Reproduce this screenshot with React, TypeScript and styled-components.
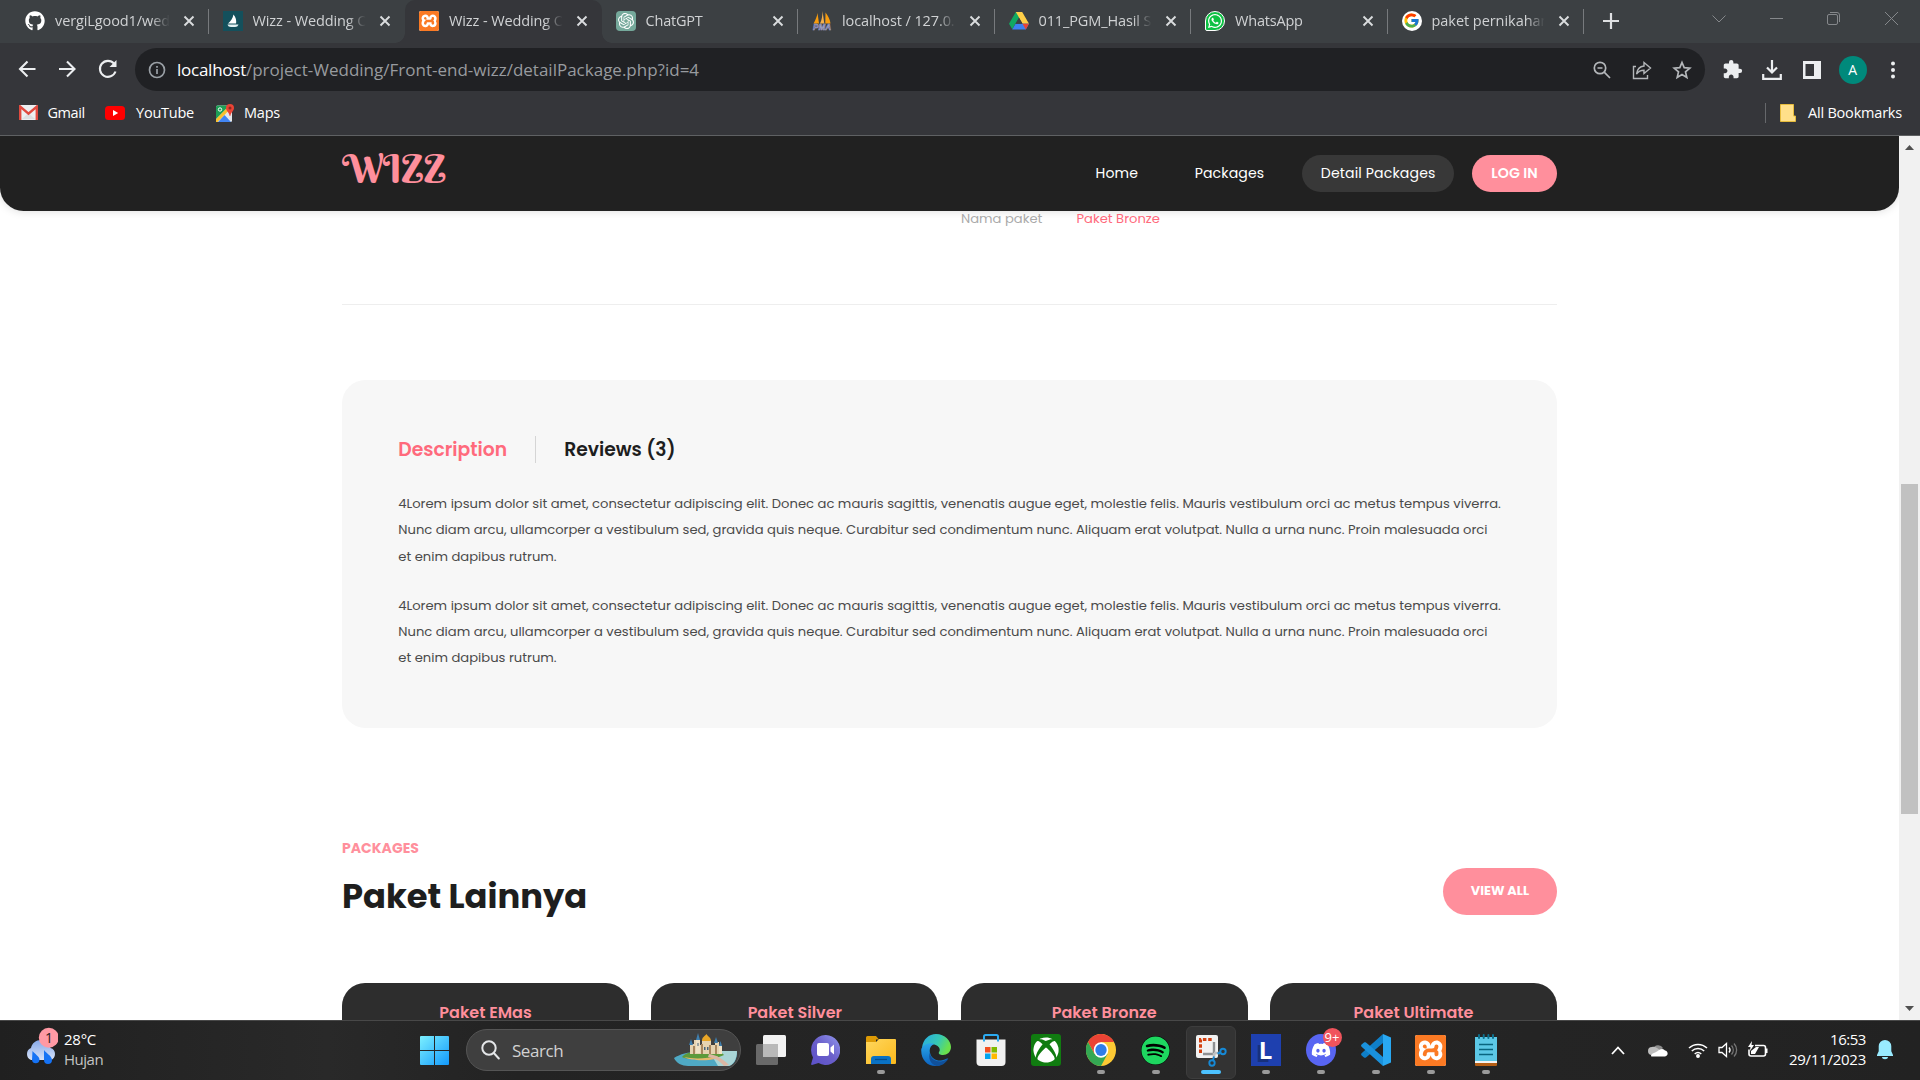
import React from 'react';
import styled, { createGlobalStyle, css } from 'styled-components';
import { SiOpenai, SiXampp } from 'react-icons/si';
import { FaGithub, FaXbox, FaSpotify, FaDiscord, FaWhatsapp } from 'react-icons/fa';
import { FcGoogle } from 'react-icons/fc';
import { MdExtension } from 'react-icons/md';

const ui = `"Segoe UI", "Open Sans", "Noto Sans", sans-serif`;
const site = `Poppins, Inter, "Liberation Sans", sans-serif`;
const pink = '#ff8f9c';
const rose = '#ff6a7c';

const GlobalStyle = createGlobalStyle`
  * { box-sizing: border-box; }
  body { margin: 0; background: #fff; }
  svg { display: block; flex: none; }
`;

const Screen = styled.div`
  width: 1920px;
  height: 1080px;
  display: flex;
  flex-direction: column;
  overflow: hidden;
  font-family: ${ui};
`;

const Label = styled.span<{ $ls?: number }>`
  white-space: nowrap;
  letter-spacing: ${p => p.$ls ?? 0}px;
`;

/* ---------- browser chrome ---------- */

const TabStrip = styled.div`
  height: 43px;
  flex: none;
  display: flex;
  padding-left: 12px;
  background: #3c4043;
  color: #d0d2d4;
`;

const Tab = styled.div<{ $active?: boolean; $divider?: boolean }>`
  width: 196.5px;
  height: 43px;
  flex: none;
  display: flex;
  align-items: center;
  padding: 0 14px 2px 14px;
  position: relative;
  font-size: 14.5px;
  &:first-child { padding-left: 13px; }
  ${p => p.$active && css`
    background: #35363a;
    border-radius: 10px 10px 0 0;
    &::before, &::after {
      content: '';
      position: absolute;
      bottom: 0;
      width: 10px;
      height: 10px;
    }
    &::before { left: -10px; background: radial-gradient(circle at 0 0, transparent 9.5px, #35363a 10px); }
    &::after { right: -10px; background: radial-gradient(circle at 100% 0, transparent 9.5px, #35363a 10px); }
  `}
  ${p => p.$divider && css`
    background-image: linear-gradient(#777a7d, #777a7d);
    background-size: 1px 25px;
    background-position: right 9px;
    background-repeat: no-repeat;
  `}
`;

const TabTitle = styled.span`
  flex: 1;
  min-width: 0;
  margin: 0 11px 0 10px;
  overflow: hidden;
  white-space: nowrap;
  mask-image: linear-gradient(90deg, #000 82%, transparent 98%);
`;

const NewTab = styled.div`
  display: flex;
  align-items: center;
  padding: 0 0 1px 19px;
`;

const WindowButtons = styled.div`
  margin-left: auto;
  display: flex;
  width: 230px;
  height: 37px;
  align-items: center;
`;

const WindowButton = styled.div`
  width: 57.5px;
  display: flex;
  justify-content: center;
  color: #85888b;
`;

const Toolbar = styled.div`
  height: 53px;
  flex: none;
  display: flex;
  align-items: center;
  background: #35363a;
  color: #eceef0;
`;

const NavButtons = styled.div`
  width: 135px;
  display: flex;
  align-items: center;
  justify-content: space-between;
  padding: 0 16px 2px 16px;
`;

const AddressBar = styled.div`
  width: 1570px;
  height: 43px;
  border-radius: 22px;
  display: flex;
  align-items: center;
  padding: 0 13px 0 13px;
  background: #202124;
  color: #b4b7ba;
`;

const Url = styled.span`
  margin-left: 11px;
  flex: 1;
  font-size: 17px;
  white-space: nowrap;
  color: #989b9f;
`;

const UrlHost = styled.span`
  color: #fff;
  letter-spacing: -0.25px;
`;

const AddressActions = styled.div`
  display: flex;
  align-items: center;
  gap: 20px;
`;

const Extensions = styled.div`
  flex: 1;
  display: flex;
  align-items: center;
`;

const ExtensionSlot = styled.div`
  width: 40.2px;
  display: flex;
  justify-content: center;
  &:first-child { margin-left: 7px; }
`;

const Avatar = styled.div`
  width: 28px;
  height: 28px;
  flex: none;
  border-radius: 50%;
  display: flex;
  align-items: center;
  justify-content: center;
  background: #00897b;
  color: #fff;
  font-size: 14px;
`;

const BookmarksBar = styled.div`
  height: 40px;
  flex: none;
  display: flex;
  align-items: center;
  padding: 0 18px 6px 19px;
  border-bottom: 1px solid #5f6163;
  background: #35363a;
  color: #fff;
  font-size: 14.5px;
`;

const Bookmark = styled.div<{ $gap: number; $space: number }>`
  display: flex;
  align-items: center;
  gap: ${p => p.$gap}px;
  margin-right: ${p => p.$space}px;
`;

const AllBookmarks = styled.div`
  margin-left: auto;
  display: flex;
  align-items: center;
  height: 20px;
  gap: 12px;
  padding-left: 14px;
  border-left: 1px solid #66686b;
`;

/* ---------- web page ---------- */

const Viewport = styled.div`
  height: 884px;
  flex: none;
  display: flex;
  background: #fff;
`;

const Page = styled.div`
  width: 1899px;
  height: 884px;
  overflow: hidden;
  font-family: ${site};
`;

const Header = styled.header`
  height: 75px;
  display: flex;
  justify-content: center;
  background: #212121;
  border-radius: 0 0 23.5px 23.5px;
  box-shadow: 0 0 10px rgba(0, 0, 0, 0.15);
`;

const Container = styled.div`
  width: 1215px;
  margin: 0 auto;
`;

const HeaderInner = styled(Container)`
  display: flex;
  align-items: flex-start;
`;

const Logo = styled.h1`
  margin: 0;
  color: ${pink};
  font: 400 38.7px/66px "Berkshire Swash", "Liberation Serif", serif;
`;

const Nav = styled.nav`
  margin: 19px 0 0 auto;
  display: flex;
  align-items: center;
`;

const NavLink = styled.a<{ $active?: boolean; $space: number }>`
  height: 37px;
  line-height: 37px;
  padding: 0 18.5px;
  margin-right: ${p => p.$space}px;
  border-radius: 19px;
  background: ${p => (p.$active ? '#383838' : 'transparent')};
  color: #fff;
  font-size: 14.1px;
  font-weight: 400;
  letter-spacing: 0.13px;
  white-space: nowrap;
`;

const LoginButton = styled.a`
  width: 85px;
  height: 37px;
  border-radius: 19px;
  background: ${pink};
  color: #fff;
  font-size: 14.2px;
  font-weight: 600;
  line-height: 37px;
  text-align: center;
  white-space: nowrap;
`;

const PackageInfo = styled.div`
  display: flex;
  height: 94px;
  padding: 1px 0 0 619px;
  border-bottom: 1px solid #eee;
  font-size: 13.125px;
  line-height: 14px;
`;

const InfoLabel = styled.span`
  width: 115.5px;
  color: #aaa;
`;

const InfoValue = styled.span`
  color: ${rose};
`;

const DetailCard = styled.section`
  height: 348px;
  margin-top: 75px;
  padding: 56px 50px 0 56.25px;
  border-radius: 23.5px;
  background: #f7f7f7;
`;

const DetailTabs = styled.div`
  display: flex;
  height: 27px;
`;

const DetailTab = styled.h3<{ $active?: boolean }>`
  margin: 0;
  padding: ${p => (p.$active ? '0 28px 0 0' : '0 0 0 28px')};
  border-right: ${p => (p.$active ? '1px solid #d5d5d5' : '0')};
  color: ${p => (p.$active ? rose : '#1e1e1e')};
  font-size: 18.75px;
  font-weight: 600;
  line-height: 28px;
`;

const DetailText = styled.p`
  margin: 0 0 23px;
  color: #4a4a4a;
  font-size: 13.14px;
  line-height: 26.25px;
`;

const DetailBody = styled.div`
  margin-top: 28px;
`;

const TextLine = styled.span`
  display: block;
  white-space: nowrap;
`;

const SectionHead = styled.div`
  display: flex;
  height: 148px;
  justify-content: space-between;
  margin-top: 107px;
`;

const Eyebrow = styled.h6`
  margin: 5px 0 0;
  color: ${pink};
  font-size: 14.06px;
  font-weight: 700;
  line-height: 16px;
`;

const SectionTitle = styled.h2`
  margin: 19px 0 0;
  color: #1e1e1e;
  font-size: 33.75px;
  font-weight: 700;
  line-height: 44px;
`;

const ViewAll = styled.a`
  width: 114px;
  height: 47px;
  margin-top: 33px;
  border-radius: 24px;
  background: ${pink};
  color: #fff;
  font-size: 12.9px;
  font-weight: 700;
  line-height: 45px;
  text-align: center;
`;

const Cards = styled.div`
  display: grid;
  grid-template-columns: repeat(4, 287px);
  justify-content: space-between;
`;

const PackageCard = styled.article`
  height: 60px;
  padding-top: 18px;
  border-radius: 23px 23px 0 0;
  background: #2d2d2d;
  color: ${pink};
  font-size: 16px;
  font-weight: 600;
  line-height: 24px;
  text-align: center;
`;

const ScrollBar = styled.div`
  width: 21px;
  display: flex;
  flex-direction: column;
  align-items: center;
  padding: 9px 0;
  background: #f1f1f1;
`;

const ScrollThumb = styled.div`
  width: 17px;
  height: 330px;
  margin: 334px 0 auto;
  background: #c1c1c1;
`;

/* ---------- taskbar ---------- */

const Taskbar = styled.div`
  height: 60px;
  flex: none;
  display: grid;
  grid-template-columns: 407px 1107px 1fr;
  border-top: 1px solid #484848;
  background: linear-gradient(90deg, #202020, #292929 17%, #232323 27%, #262626 60%, #222);
  color: #fff;
  font-size: 15px;
`;

const Weather = styled.div`
  display: flex;
  padding: 6px 0 0 22px;
  gap: 6px;
`;

const Stack = styled.div<{ $end?: boolean }>`
  display: flex;
  flex-direction: column;
  line-height: 20px;
  padding-top: 2px;
  align-items: ${p => (p.$end ? 'flex-end' : 'flex-start')};
`;

const Muted = styled(Label)`
  color: #c4c4c4;
`;

const Apps = styled.div`
  display: flex;
`;

const AppSlot = styled.div<{ $active?: boolean }>`
  width: 55px;
  height: 60px;
  flex: none;
  display: flex;
  flex-direction: column;
  align-items: center;
  padding-top: 11px;
  ${p => p.$active && css`
    width: 50px;
    height: 53px;
    margin: 5px 2.5px 0;
    border: 1px solid #3d3d3d;
    border-radius: 6px;
    background: #333;
    padding-top: 5px;
  `}
`;

const IconBox = styled.div`
  width: 36px;
  height: 36px;
  display: flex;
  align-items: center;
  justify-content: center;
`;

const Indicator = styled.div<{ $active?: boolean }>`
  width: ${p => (p.$active ? 20 : 8)}px;
  height: 4px;
  margin-top: 2px;
  border-radius: 2px;
  background: ${p => (p.$active ? '#4cc2ff' : '#9a9a9a')};
`;

const SearchBox = styled.div`
  width: 275px;
  height: 42px;
  margin: 8px 2px 0 4px;
  flex: none;
  display: flex;
  align-items: center;
  padding: 0 2px 0 14px;
  border: 1px solid #555;
  border-radius: 21px;
  background: #3f3f3f;
  color: #d2d2d2;
  font-size: 17px;
  gap: 12px;
`;

const Scene = styled.div`
  margin-left: auto;
`;

const LetterIcon = styled.div`
  width: 30px;
  height: 32px;
  background: #1e40af;
  color: #fff;
  font: 700 24px/31px "Open Sans", sans-serif;
  text-align: center;
  text-shadow: -3px 3px 0 #17307c;
`;

const XamppIcon = styled.div<{ $size: number }>`
  width: ${p => p.$size}px;
  height: ${p => p.$size}px;
  border-radius: 2px;
  overflow: hidden;
  display: flex;
  align-items: center;
  justify-content: center;
  background: #fff;
  color: #fb7a24;
  svg { transform: scale(1.04); }
`;

const XboxIcon = styled.div`
  width: 30px;
  height: 32px;
  border-radius: 3px;
  display: flex;
  align-items: center;
  justify-content: center;
  background: #107c10;
`;

const DiscordIcon = styled.div`
  width: 30px;
  height: 32px;
  border-radius: 50%;
  display: flex;
  align-items: center;
  justify-content: center;
  position: relative;
  background: #5865f2;
`;

const DiscordBadge = styled.span`
  position: absolute;
  top: -6px;
  left: 17px;
  width: 19px;
  height: 19px;
  border-radius: 50%;
  background: #f0545c;
  font-size: 13px;
  line-height: 18px;
  text-align: center;
`;

const OpenAiIcon = styled.div`
  width: 20px;
  height: 20px;
  border-radius: 4px;
  display: flex;
  align-items: center;
  justify-content: center;
  background: #75a99b;
  color: #fff;
`;

const SpotifyIcon = styled.div`
  width: 29px;
  height: 29px;
  border-radius: 50%;
  background: #000;
  color: #1ed760;
`;

const WhatsIcon = styled.div`
  width: 20px;
  height: 20px;
  display: flex;
  align-items: center;
  justify-content: center;
  border-radius: 10px 10px 10px 2px;
  border: 1px solid #fff;
  background: #0dc143;
  color: #fff;
`;

const GoogleIcon = styled.div`
  width: 20px;
  height: 20px;
  border-radius: 50%;
  display: flex;
  align-items: center;
  justify-content: center;
  background: #fff;
`;

const Tray = styled.div`
  display: flex;
  align-items: center;
  justify-content: flex-end;
  padding: 0 26px 2px 0;
`;

const TrayIcons = styled.div`
  display: flex;
  align-items: center;
  margin-right: 15.5px;
`;

const TraySlot = styled.div<{ $w: number }>`
  width: ${p => p.$w}px;
  display: flex;
  justify-content: center;
`;

const Clock = styled(Stack)`
  margin-right: 10px;
  height: 58px;
  padding-top: 8px;
`;

/* ---------- drawings ---------- */

const Close = () => (
  <svg width="12" height="12" viewBox="0 0 12 12" stroke="#dadcde" strokeWidth="1.900"><path d="M1.500 1.500l9 9M10.500 1.500l-9 9" /></svg>
);

const Sailboat = () => (
  <svg width="20" height="20" viewBox="0 0 20 20">
    <rect width="20" height="20" fill="#14505c" />
    <path d="M10.500 3.500c2.500 3 3 6 2.600 9H5c2.500-2 4.800-5 5.500-9z" fill="#fff" />
    <path d="M4.500 13.500h11c-.6 1.700-1.800 2.500-3.500 2.500H8c-1.800 0-3-.8-3.500-2.500z" fill="#e4f2f3" />
  </svg>
);

const PhpMyAdmin = () => (
  <svg width="20" height="20" viewBox="0 0 20 20">
    <path d="M5.500 2L7 12.500H1.500C3.500 9 5 5.500 5.500 2z" fill="#f89c0e" />
    <path d="M10.500 0l1.800 12.500H8C9.800 9 10.500 5 10.500 0z" fill="#f5b04c" />
    <path d="M13.500 1.500c2.500 3 4.500 7 5 11h-5.200z" fill="#f89c0e" />
    <text x="1" y="19.300" textLength="18" lengthAdjust="spacingAndGlyphs" fontFamily="Liberation Sans" fontWeight="700" fontStyle="italic" fontSize="8.500" fill="#5a5a8e" stroke="#b5b5d6" strokeWidth=".5">PMA</text>
  </svg>
);

const Drive = () => (
  <svg width="20" height="18" viewBox="0 0 20 18">
    <path d="M6.800 0h6.400l-6.600 11.600-3.300 5.700L0 11.700z" fill="#11a861" />
    <path d="M6.800 0h6.400l6.800 11.700h-6.500z" fill="#ffcf48" />
    <path d="M6.600 11.700H20l-3.200 5.700H3.200z" fill="#3d81f0" />
    <path d="M13.500 11.700H20l-3.200 5.700z" fill="#e94436" />
    <path d="M10 5.700l3.500 6h-7z" fill="#3c4043" />
  </svg>
);

const Gmail = () => (
  <svg width="19" height="15" viewBox="0 0 19 15">
    <rect width="19" height="15" rx="1.500" fill="#eceff1" />
    <path d="M3 14l6.500-6L16 14z" fill="#dcdfe1" />
    <path d="M1.200 15V1.600l8.300 7 8.300-7V15" fill="none" stroke="#e04a3f" strokeWidth="2.400" />
  </svg>
);

const YouTube = () => (
  <svg width="20" height="14" viewBox="0 0 20 14"><rect width="20" height="14" rx="3.500" fill="#f00" /><path d="M8 4l5.200 3L8 10z" fill="#fff" /></svg>
);

const Maps = () => (
  <svg width="18" height="18" viewBox="0 0 18 18">
    <rect y="1.500" width="16" height="16.500" rx="1.500" fill="#e5e8ea" />
    <path d="M2 18l6.500-7 6.500 7z" fill="#4285f4" />
    <path d="M0 15L12 2.500l2.500 2.300L1.500 18H0z" fill="#fbc02d" />
    <path d="M0 15V3a1.500 1.500 0 011.500-1.500H12L11 3.800z" fill="#1e9f56" />
    <path d="M14 0a4 4 0 00-4 4c0 3 3 4 3.700 8h.6C15 8 18 7 18 4a4 4 0 00-4-4z" fill="#ea4335" />
    <circle cx="14" cy="4" r="1.500" fill="#8c2a20" />
    <circle cx="4" cy="5.500" r="1.700" fill="none" stroke="#fff" />
  </svg>
);

const Rain = () => (
  <svg width="36" height="46" viewBox="0 0 36 46">
    <defs><linearGradient id="cloud" x1="0" y1="0" x2="0" y2="1"><stop offset="0" stopColor="#86a9ea" /><stop offset="1" stopColor="#d6e1f7" /></linearGradient></defs>
    <path d="M9 33a6.500 6.500 0 010-12c1-5 5-8 10-8s8.500 3 9.500 8c6 1 6 11 0 12z" fill="url(#cloud)" />
    <path d="M10.500 24c2 3 7 5 7 9a3.800 3.800 0 01-7.500 0zM22 23c2 3 8 6 8 10a4 4 0 01-8 0z" fill="#1673f5" />
    <circle cx="26.800" cy="10.800" r="10" fill="#ff99a4" />
    <text x="27" y="16" textAnchor="middle" fontFamily="Open Sans" fontSize="14" fill="#2b1a1c">1</text>
  </svg>
);

const Windows = () => (
  <svg width="29" height="29" viewBox="0 0 29 29">
    <defs><linearGradient id="win" x1="0" y1="0" x2="1" y2="1"><stop offset="0" stopColor="#7cf0ff" /><stop offset="1" stopColor="#1299fb" /></linearGradient></defs>
    <path d="M1 0h13v14H0V1a1 1 0 011-1zM15 0h13a1 1 0 011 1v13H15zM0 15h14v14H1a1 1 0 01-1-1zM15 15h14v13a1 1 0 01-1 1H15z" fill="url(#win)" />
  </svg>
);

const Castle = () => (
  <svg width="64" height="34" viewBox="0 0 64 34">
    <path d="M0 25C6 21 14 19 24 19h39c0 7-3 14-10 14H14C8 33 2 30 0 25z" fill="#4fa9c4" />
    <path d="M35 18h28c0 8-4 15-9 15H44z" fill="#a9d5d6" />
    <path d="M8 24c4-5 12-6 22-6s18 1 20 4c-6 3-15 4-24 4s-14 0-18-2z" fill="#5d9a3b" />
    <path d="M10 24c8 2 22 2 34-1l-3 3c-9 2-24 2-31-2z" fill="#e5b96d" />
    <path d="M35 21c7 1 13 4 20 11l-5 1c-4-5-9-8-16-9z" fill="#dcb7a4" />
    <path d="M16 21V11h4V7h4v5h4V7h9v5h4V9h4v12z" fill="#e6d3b1" />
    <path d="M19 13h2v8h-2zM27 11h2v10h-2zM35 12h2v9h-2zM41 12h2v9h-2z" fill="#a8875f" />
    <path d="M15 12l2-6 2 6zM22 7l2-7 2 7zM40 10l2-6 2 6zM45 13l1.500-5 1.500 5z" fill="#3f7fae" />
    <path d="M28 8c0-4 2-4 4.500-7C34 4 37 4 37 8z" fill="#e8a526" />
    <path d="M22 7h4v13h-4zM45 13h3v8h-3z" fill="#f0e2c6" />
    <path d="M30 14h1.500v3H30zM33 14h1.500v3H33zM23.500 10h1v3h-1z" fill="#4b6578" />
  </svg>
);

const TaskView = () => (
  <svg width="30" height="30" viewBox="0 0 30 30"><rect x="7" width="23" height="22" rx="1.500" fill="#f2f2f2" /><rect y="9" width="22" height="21" rx="1.500" fill="#696969" /><path d="M7 9h15v13H7z" fill="#b9b9b9" /></svg>
);

const Chat = () => (
  <svg width="29" height="30" viewBox="0 0 29 30">
    <defs><linearGradient id="chat" x1="0" y1="1" x2="1" y2="0"><stop offset="0" stopColor="#5b50c9" /><stop offset=".5" stopColor="#6a5fca" /><stop offset="1" stopColor="#9298ee" /></linearGradient></defs>
    <path d="M14.500 0a14.500 15 0 11-7 28L1 30c-.8 0-1-.5-.8-1.200L2 22.500A14.500 15 0 0114.500 0z" fill="url(#chat)" />
    <rect x="6" y="8" width="12" height="13" rx="2" fill="#fff" /><path d="M19.500 12.500l3.500-3v10l-3.500-3z" fill="#fff" />
  </svg>
);

const Explorer = () => (
  <svg width="30" height="28" viewBox="0 0 30 28">
    <defs><linearGradient id="folder" x1="0" y1="0" x2="1" y2="1"><stop offset="0" stopColor="#ffd75e" /><stop offset="1" stopColor="#fbb91c" /></linearGradient></defs>
    <path d="M0 1.500A1.500 1.500 0 011.500 0H10l3 3.500h-3V8H0z" fill="#dd9a05" />
    <path d="M0 6h10l3-3h16a1 1 0 011 1v23a1 1 0 01-1 1H0z" fill="url(#folder)" />
    <path d="M5 28v-5a3 3 0 013-3h14a3 3 0 013 3v5z" fill="#0a72c4" /><path d="M9 23.500h12" stroke="#054d8c" strokeWidth="1.200" />
  </svg>
);

const Edge = () => (
  <svg width="30" height="32" viewBox="0 0 30 32">
    <defs>
      <linearGradient id="edgeTop" x1="0" y1="0" x2="1" y2=".4"><stop offset="0" stopColor="#27a9e6" /><stop offset=".6" stopColor="#36c9b4" /><stop offset="1" stopColor="#6ae04c" /></linearGradient>
      <linearGradient id="edgeLow" x1="0" y1="0" x2="0" y2="1"><stop offset="0" stopColor="#2aa7e8" /><stop offset="1" stopColor="#0b62c0" /></linearGradient>
    </defs>
    <path d="M1 14C2 5 8 0 15 0c9 0 15 7 15 13 0 5-4 8-8 8-3 0-5-1-4-3 1-1 1-3 0-4.500C15 9 6 8.500 1 14z" fill="url(#edgeTop)" />
    <path d="M.3 15C3 9.500 9 8.500 13.500 10c-4 1-5.500 5-4.500 9 1.200 5 6 8 11 7.500 3-.3 5-1.500 7-2.500-3 5-7 8-12.500 8C6 32-.5 25 .3 15z" fill="url(#edgeLow)" />
    <path d="M9 18c0 6 5 10 11 9.500 3-.3 5-1.500 7.500-3-3 5-7 7.500-12 7.500C9 30 7 24 9 18z" fill="#10509a" />
  </svg>
);

const Store = () => (
  <svg width="30" height="32" viewBox="0 0 30 32">
    <path d="M8 8V2.500A1.500 1.500 0 019.500 1h11A1.500 1.500 0 0122 2.500V8" fill="none" stroke="#2caaf0" strokeWidth="2" />
    <path d="M0.500 5.500h29V28a4 4 0 01-4 4h-21a4 4 0 01-4-4z" fill="#f1f1f1" />
    <path d="M8 5v2.500M22 5v2.500" stroke="#2caaf0" strokeWidth="2" />
    <path d="M9 13h5.500v5.500H9z" fill="#f25022" /><path d="M15.500 13H21v5.500h-5.500z" fill="#7fba00" />
    <path d="M9 19.500h5.500V25H9z" fill="#00a4ef" /><path d="M15.500 19.500H21V25h-5.500z" fill="#ffb900" />
  </svg>
);

const Chrome = () => (
  <svg width="30" height="32" viewBox="0 0 30 30" preserveAspectRatio="none">
    <circle cx="15" cy="15" r="15" fill="#fcc934" />
    <path d="M2 7.500A15 15 0 0128 7.500H15l-6.500 11z" fill="#ea4335" />
    <path d="M2 7.500A15 15 0 0015 30l6.500-11.300L15 15 8.500 18.700z" fill="#34a853" />
    <circle cx="15" cy="15" r="7.300" fill="#fff" /><circle cx="15" cy="15" r="5.700" fill="#2f7de9" />
  </svg>
);

const Snip = () => (
  <svg width="32" height="34" viewBox="0 0 32 34">
    <rect x="1" y="2" width="22" height="23" rx="2" fill="#f2f2f2" />
    <path d="M5.500 20V6.500H17" fill="none" stroke="#d3400f" strokeWidth="3" strokeDasharray="3.500 1.800" />
    <path d="M8 21h11V9" fill="none" stroke="#8f9193" strokeWidth="2.400" /><path d="M19 20v5M19 20h6" stroke="#bfc1c3" strokeWidth="2.600" />
    <path d="M18 27.500l1-4M22.500 20.500l3-1" fill="none" stroke="#1689d6" strokeWidth="1.900" />
    <circle cx="28" cy="18.500" r="2.700" fill="none" stroke="#1689d6" strokeWidth="1.900" /><circle cx="17" cy="30" r="2.700" fill="none" stroke="#1689d6" strokeWidth="1.900" />
  </svg>
);

const Code = () => (
  <svg width="30" height="32" viewBox="0 0 30 32">
    <path d="M22 0l8 3.500v25L22 32z" fill="#29a8f2" />
    <path d="M22 0v9L5 23.500c-.6.500-1.400.4-2 0L.6 21.400c-.7-.6-.7-1.600 0-2.200z" fill="#0f7fc8" />
    <path d="M22 32v-9L5 8.500c-.6-.5-1.400-.4-2 0L.6 10.600c-.7.600-.7 1.600 0 2.200z" fill="#1a91dc" />
  </svg>
);

const Notepad = () => (
  <svg width="24" height="32" viewBox="0 0 24 32">
    <path d="M1 28h22v3a1 1 0 01-1 1H2a1 1 0 01-1-1z" fill="#b55f16" /><path d="M1 26h22v3H1z" fill="#f3f3f3" />
    <path d="M1 3h22v24H1z" fill="#5cc8e6" />
    <path d="M5 1v3M9.700 1v3M14.400 1v3M19 1v3" stroke="#0d6f8c" strokeWidth="2" strokeLinecap="round" />
    <path d="M5 10.500h14M5 15.500h14M5 20.500h14" stroke="#09657f" strokeWidth="1.700" />
  </svg>
);

const Arrow = ({ flip }: { flip?: boolean }) => (
  <svg width="22" height="22" viewBox="0 0 22 22" fill="none" stroke="#eceef0" strokeWidth="2.100">
    {flip ? <path d="M2 11h15M10 3.500l7.500 7.500-7.500 7.500" /> : <path d="M19.500 11H4.500M11.500 3.500L4 11l7.500 7.500" />}
  </svg>
);

const tabs: { title: string; icon: React.ReactNode; active?: boolean; divider?: boolean; ls: number }[] = [
  { title: 'vergiLgood1/wed', ls: -0.1, divider: true, icon: <FaGithub size={20} color="#fff" /> },
  { title: 'Wizz - Wedding O', ls: -0.1, icon: <Sailboat /> },
  { title: 'Wizz - Wedding O', ls: -0.1, active: true, icon: <XamppIcon $size={20}><SiXampp size={20} /></XamppIcon> },
  { title: 'ChatGPT', ls: -0.2, divider: true, icon: <OpenAiIcon><SiOpenai size={16} /></OpenAiIcon> },
  { title: 'localhost / 127.0.', ls: -0.1, divider: true, icon: <PhpMyAdmin /> },
  { title: '011_PGM_Hasil S', ls: -0.12, divider: true, icon: <Drive /> },
  { title: 'WhatsApp', ls: -0.2, divider: true, icon: <WhatsIcon><FaWhatsapp size={16} /></WhatsIcon> },
  { title: 'paket pernikahan', ls: -0.05, divider: true, icon: <GoogleIcon><FcGoogle size={17} /></GoogleIcon> },
];

const paragraph = [
  '4Lorem ipsum dolor sit amet, consectetur adipiscing elit. Donec ac mauris sagittis, venenatis augue eget, molestie felis. Mauris vestibulum orci ac metus tempus viverra.',
  'Nunc diam arcu, ullamcorper a vestibulum sed, gravida quis neque. Curabitur sed condimentum nunc. Aliquam erat volutpat. Nulla a urna nunc. Proin malesuada orci',
  'et enim dapibus rutrum.',
];

const packages = ['Paket EMas', 'Paket Silver', 'Paket Bronze', 'Paket Ultimate'];

const apps: { name: string; icon: React.ReactNode; running?: boolean; active?: boolean }[] = [
  { name: 'task-view', icon: <TaskView /> },
  { name: 'chat', icon: <Chat /> },
  { name: 'explorer', icon: <Explorer />, running: true },
  { name: 'edge', icon: <Edge /> },
  { name: 'store', icon: <Store /> },
  { name: 'xbox', icon: <XboxIcon><FaXbox size={26} color="#fff" /></XboxIcon> },
  { name: 'chrome', icon: <Chrome />, running: true },
  { name: 'spotify', icon: <SpotifyIcon><FaSpotify size={29} /></SpotifyIcon>, running: true },
  { name: 'snip', icon: <Snip />, active: true },
  { name: 'letter', icon: <LetterIcon>L</LetterIcon>, running: true },
  { name: 'discord', icon: <DiscordIcon><FaDiscord size={20} color="#fff" /><DiscordBadge>9+</DiscordBadge></DiscordIcon>, running: true },
  { name: 'code', icon: <Code />, running: true },
  { name: 'xampp', icon: <XamppIcon $size={31}><SiXampp size={31} /></XamppIcon>, running: true },
  { name: 'notepad', icon: <Notepad />, running: true },
];

export default function App() {
  return (
    <Screen>
      <GlobalStyle />
      <TabStrip>
        {tabs.map((t, i) => (
          <Tab key={i} $active={t.active} $divider={t.divider}>
            {t.icon}
            <TabTitle><Label $ls={t.ls}>{t.title}</Label></TabTitle>
            <Close />
          </Tab>
        ))}
        <NewTab><svg width="16" height="16" viewBox="0 0 16 16" stroke="#dee0e2" strokeWidth="2.200"><path d="M8 0v16M0 8h16" /></svg></NewTab>
        <WindowButtons>
          <WindowButton><svg width="14" height="8" viewBox="0 0 14 8" fill="none" stroke="currentColor"><path d="M.5.5L7 7 13.500.5" /></svg></WindowButton>
          <WindowButton><svg width="13" height="2" viewBox="0 0 13 2" stroke="currentColor"><path d="M0 .5h13" /></svg></WindowButton>
          <WindowButton><svg width="13" height="13" viewBox="0 0 13 13" fill="none" stroke="currentColor"><rect x=".5" y="2.500" width="10" height="10" rx="1.500" /><path d="M3 .5h7a2.500 2.500 0 012.500 2.500v7" /></svg></WindowButton>
          <WindowButton><svg width="13" height="13" viewBox="0 0 13 13" stroke="currentColor"><path d="M0 0l13 13M13 0L0 13" /></svg></WindowButton>
        </WindowButtons>
      </TabStrip>

      <Toolbar>
        <NavButtons>
          <Arrow /><Arrow flip />
          <svg width="22" height="22" viewBox="0 0 22 22"><path d="M18.500 13.500A8 8 0 1117 5.600" fill="none" stroke="#eceef0" strokeWidth="2.100" /><path d="M19.500 2v7h-7z" fill="#eceef0" /></svg>
        </NavButtons>
        <AddressBar>
          <svg width="18" height="18" viewBox="0 0 18 18" fill="none" stroke="#9aa0a6" strokeWidth="1.700"><circle cx="9" cy="9" r="7.500" /><path d="M9 8v5M9 5v1.800" /></svg>
          <Url><UrlHost>localhost</UrlHost>/project-Wedding/Front-end-wizz/detailPackage.php?id=4</Url>
          <AddressActions>
            <svg width="20" height="20" viewBox="0 0 20 20" fill="none" stroke="currentColor" strokeWidth="1.700"><circle cx="8" cy="8" r="5.700" /><path d="M12.200 12.200L18 18M5.500 8h5" /></svg>
            <svg width="20" height="20" viewBox="0 0 20 20" fill="none" stroke="currentColor" strokeWidth="1.400"><path d="M4 6.500H1.500v12h14V15" /><path d="M12 2.500L18.500 8 12 13.500V10.300c-3.300 0-5.500 1-7.500 3.700.6-4.500 3-7.500 7.500-8z" /></svg>
            <svg width="20" height="20" viewBox="0 0 20 20" fill="none" stroke="currentColor" strokeWidth="1.700"><path d="M10 2.500l2.200 5.200 5.600.5-4.300 3.700 1.300 5.500-4.800-2.900-4.800 2.900 1.300-5.500-4.300-3.700 5.600-.5z" /></svg>
          </AddressActions>
        </AddressBar>
        <Extensions>
          <ExtensionSlot><MdExtension size={21} /></ExtensionSlot>
          <ExtensionSlot><svg width="20" height="20" viewBox="0 0 20 20" fill="none" stroke="currentColor" strokeWidth="2.200"><path d="M10 0v11.500M5 7.500l5 5 5-5M1.200 14v4.800h17.600V14" /></svg></ExtensionSlot>
          <ExtensionSlot><svg width="18" height="18" viewBox="0 0 18 18"><path d="M0 0h18v18H0z" fill="currentColor" /><path d="M2.500 3H11v12H2.500z" fill="#35363a" /></svg></ExtensionSlot>
          <ExtensionSlot><Avatar>A</Avatar></ExtensionSlot>
          <ExtensionSlot><svg width="4" height="18" viewBox="0 0 4 18" fill="currentColor"><circle cx="2" cy="2.500" r="2" /><circle cx="2" cy="9" r="2" /><circle cx="2" cy="15.500" r="2" /></svg></ExtensionSlot>
        </Extensions>
      </Toolbar>

      <BookmarksBar>
        <Bookmark $gap={9.5} $space={20.5}><Gmail /><Label $ls={-0.45}>Gmail</Label></Bookmark>
        <Bookmark $gap={11} $space={22}><YouTube /><Label $ls={-0.25}>YouTube</Label></Bookmark>
        <Bookmark $gap={10} $space={0}><Maps /><Label $ls={-0.2}>Maps</Label></Bookmark>
        <AllBookmarks>
          <svg width="16" height="18" viewBox="0 0 16 18"><path d="M.5.5h13v11.500h2v5.500H.5z" fill="#ffe08a" stroke="#e6bc3c" /></svg>
          <Label $ls={-0.2}>All Bookmarks</Label>
        </AllBookmarks>
      </BookmarksBar>

      <Viewport>
        <Page>
          <Header>
            <HeaderInner>
              <Logo>WIZZ</Logo>
              <Nav>
                <NavLink $space={19.5}>Home</NavLink>
                <NavLink $space={19.5}>Packages</NavLink>
                <NavLink $space={18} $active>Detail Packages</NavLink>
                <LoginButton>LOG IN</LoginButton>
              </Nav>
            </HeaderInner>
          </Header>
          <Container>
            <PackageInfo><InfoLabel>Nama paket</InfoLabel><InfoValue>Paket Bronze</InfoValue></PackageInfo>
            <DetailCard>
              <DetailTabs>
                <DetailTab $active>Description</DetailTab>
                <DetailTab>Reviews (3)</DetailTab>
              </DetailTabs>
              <DetailBody>
                {[0, 1].map(n => (
                  <DetailText key={n}>
                    {paragraph.map(line => <TextLine key={line}>{line}</TextLine>)}
                  </DetailText>
                ))}
              </DetailBody>
            </DetailCard>
            <SectionHead>
              <div>
                <Eyebrow>PACKAGES</Eyebrow>
                <SectionTitle>Paket Lainnya</SectionTitle>
              </div>
              <ViewAll>VIEW ALL</ViewAll>
            </SectionHead>
            <Cards>
              {packages.map(name => <PackageCard key={name}>{name}</PackageCard>)}
            </Cards>
          </Container>
        </Page>
        <ScrollBar>
          <svg width="9" height="5" viewBox="0 0 9 5"><path d="M0 5l4.500-5L9 5z" fill="#505050" /></svg>
          <ScrollThumb />
          <svg width="9" height="5" viewBox="0 0 9 5"><path d="M0 0l4.500 5L9 0z" fill="#505050" /></svg>
        </ScrollBar>
      </Viewport>

      <Taskbar>
        <Weather>
          <Rain />
          <Stack><Label $ls={-0.25}>28°C</Label><Muted $ls={-0.5}>Hujan</Muted></Stack>
        </Weather>
        <Apps>
          <AppSlot><IconBox><Windows /></IconBox></AppSlot>
          <SearchBox>
            <svg width="19" height="20" viewBox="0 0 19 20" fill="none" stroke="#e4e6e8" strokeWidth="2"><circle cx="8" cy="8" r="6.700" /><path d="M12.800 13l5 5.500" strokeLinecap="round" /></svg>
            <Label $ls={-0.45}>Search</Label>
            <Scene><Castle /></Scene>
          </SearchBox>
          {apps.map(a => (
            <AppSlot key={a.name} $active={a.active}>
              <IconBox>{a.icon}</IconBox>
              {(a.running || a.active) && <Indicator $active={a.active} />}
            </AppSlot>
          ))}
        </Apps>
        <Tray>
          <TrayIcons>
            <TraySlot $w={30}><svg width="14" height="9" viewBox="0 0 14 9" fill="none" stroke="#fff" strokeWidth="1.800"><path d="M1 8l6-6.500L13 8" /></svg></TraySlot>
            <TraySlot $w={50}><svg width="20" height="14" viewBox="0 0 20 14"><path d="M5 6a5.500 5.500 0 0110-1l-4 4z" fill="#8c8c8c" /><path d="M4 12a4 4 0 010-8c4-1 6 2 9 4l-4 4z" fill="#bdbdbd" /><path d="M3 13c0-3 5-3 8-6 3-2 5-1 6 .5 3 .5 4 4.500 0 6H5c-1 0-2 0-2-.5z" fill="#fff" /></svg></TraySlot>
            <TraySlot $w={30}><svg width="20" height="16" viewBox="0 0 20 16" fill="none" stroke="#fff" strokeWidth="1.500"><path d="M1 6a13 13 0 0118 0M3.800 9a9 9 0 0112.400 0M6.700 12a5 5 0 016.600 0" /><circle cx="10" cy="14" r="1.200" fill="#fff" /></svg></TraySlot>
            <TraySlot $w={30}><svg width="20" height="16" viewBox="0 0 20 16" fill="none" stroke="#fff" strokeWidth="1.300"><path d="M1 5.500h3L8.500 1.500v13L4 10.500H1z" /><path d="M11 5.500c1.300 1.500 1.300 3.500 0 5" /><path d="M13.500 3.500c2.300 2.600 2.300 6.400 0 9M16 1.500c3.500 3.700 3.500 9.300 0 13" stroke="#777" /></svg></TraySlot>
            <TraySlot $w={30}><svg width="20" height="18" viewBox="0 0 20 18"><path d="M7 4.500h8.500a2 2 0 012 2V13a2 2 0 01-2 2H3a2 2 0 01-2-2V8.500" fill="none" stroke="#fff" strokeWidth="1.600" /><path d="M18 7.500h1.500v4.500H18zM3 13V10l5-4h3L7 13z" fill="#fff" /><path d="M4 0L0 6h2.500L2 10l4-6H3.500z" fill="#fff" /></svg></TraySlot>
          </TrayIcons>
          <Clock $end><Label $ls={-0.45}>16:53</Label><Label $ls={-0.26}>29/11/2023</Label></Clock>
          <svg width="18" height="20" viewBox="0 0 18 20" fill="#99ebff"><path d="M9 0a6.300 6.300 0 016.300 6.300v5L17 15v1H1v-1l1.700-3.700v-5A6.300 6.300 0 019 0zM6 17h6c0 3-6 3-6 0z" /></svg>
        </Tray>
      </Taskbar>
    </Screen>
  );
}
